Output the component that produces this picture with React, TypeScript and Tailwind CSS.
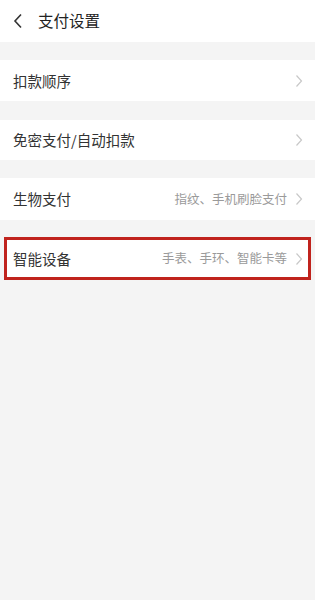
import React from 'react';

const font = { fontFamily: '"Noto Sans CJK SC", "Noto Sans", sans-serif' };

const Chevron: React.FC = () => (
  <svg width="8" height="14" viewBox="0 0 8 14" className="shrink-0">
    <path d="M1.5 1.5 L6.5 7 L1.5 12.5" fill="none" stroke="#c8c8c8" strokeWidth="1.2" />
  </svg>
);

const Row: React.FC<{ label: string; hint?: string; pad?: string }> = ({ label, hint, pad = 'pl-[13px] pr-[12px]' }) => (
  <div className={`flex items-center justify-between h-full ${pad}`}>
    <span className="text-[14.5px] text-[#333]">{label}</span>
    <div className="flex items-center gap-[8px]">
      {hint && <span className="text-[12.5px] text-[#9a9a9a]">{hint}</span>}
      <Chevron />
    </div>
  </div>
);

const App: React.FC = () => {
  return (
    <div className="w-[315px] h-[600px] bg-[#f4f4f4]" style={font}>
      {/* Header */}
      <div className="h-[42px] bg-white flex items-center">
        <svg width="12" height="16" viewBox="0 0 12 16" className="ml-[12px]">
          <path d="M9 1.5 L3 8 L9 14.5" fill="none" stroke="#333" strokeWidth="1.6" />
        </svg>
        <span className="ml-[14px] text-[15.5px] text-[#222]">支付设置</span>
      </div>

      <div className="h-[18px]" />
      <div className="h-[41px] bg-white">
        <Row label="扣款顺序" />
      </div>

      <div className="h-[19px]" />
      <div className="h-[40px] bg-white">
        <Row label="免密支付/自动扣款" />
      </div>

      <div className="h-[18px]" />
      <div className="h-[42px] bg-white">
        <Row label="生物支付" hint="指纹、手机刷脸支付" />
      </div>

      <div className="h-[17px]" />
      <div className="mx-[4px] h-[43px] bg-white border-[3px] border-[#c0231d]">
        <Row label="智能设备" hint="手表、手环、智能卡等" pad="pl-[6px] pr-[5px]" />
      </div>
    </div>
  );
};

export default App;
